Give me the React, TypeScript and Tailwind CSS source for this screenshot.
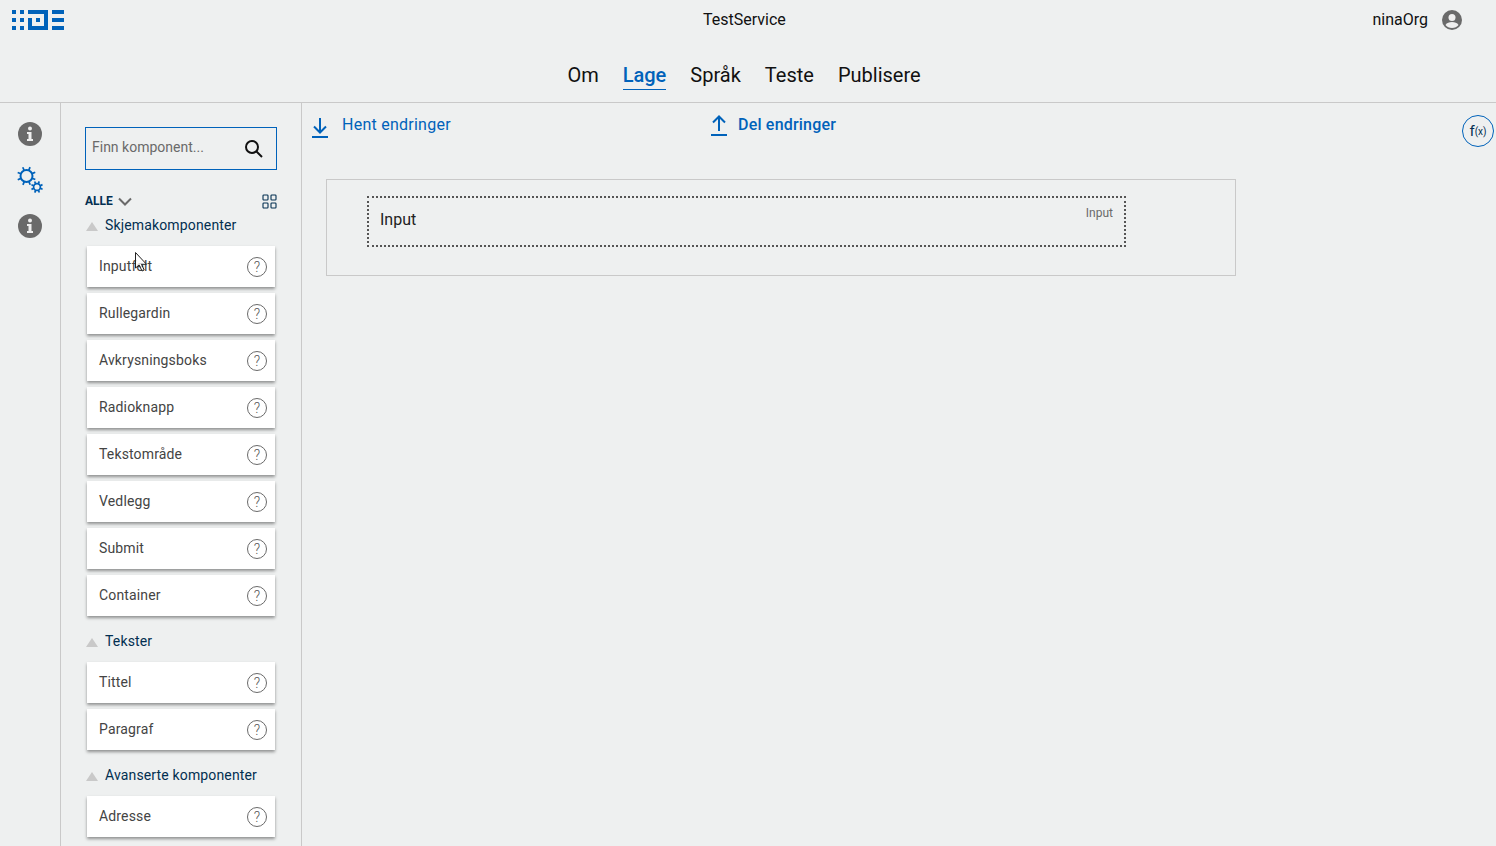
const font = { fontFamily: "Roboto, sans-serif" }

const groups = [
  {
    title: "Skjemakomponenter",
    items: ["Inputfelt", "Rullegardin", "Avkrysningsboks", "Radioknapp", "Tekstområde", "Vedlegg", "Submit", "Container"],
  },
  { title: "Tekster", items: ["Tittel", "Paragraf"] },
  { title: "Avanserte komponenter", items: ["Adresse"] },
]

const navItems = ["Om", "Lage", "Språk", "Teste", "Publisere"]

function Logo() {
  return (
    <svg width="53" height="20" viewBox="0 0 53 20" fill="#0062ba">
      <rect x="0" y="0" width="4" height="4" />
      <rect x="8" y="0" width="4" height="4" />
      <rect x="0" y="8" width="4" height="4" />
      <rect x="8" y="8" width="4" height="4" />
      <rect x="0" y="16" width="4" height="4" />
      <rect x="8" y="16" width="4" height="4" />
      <rect x="16" y="0" width="20" height="4" />
      <rect x="32" y="0" width="4" height="20" />
      <rect x="16" y="8" width="4" height="12" />
      <rect x="16" y="16" width="20" height="4" />
      <rect x="24" y="8" width="4" height="4" />
      <rect x="40" y="0" width="12" height="4" />
      <rect x="40" y="8" width="12" height="4" />
      <rect x="40" y="16" width="12" height="4" />
    </svg>
  )
}

function InfoIcon() {
  return (
    <svg width="24" height="24" viewBox="0 0 24 24">
      <circle cx="12" cy="12" r="12" fill="#6a6a6a" />
      <circle cx="12" cy="6.5" r="2" fill="#efefef" />
      <path d="M9 10h4.500v7H15v2H9v-2h1.500v-5H9z" fill="#efefef" />
    </svg>
  )
}

function Gear({ cx, cy, r, sw, outer }: { cx: number; cy: number; r: number; sw: number; outer: number }) {
  const teeth = [0, 45, 90, 135, 180, 225, 270, 315]
  return (
    <g stroke="#0062ba" fill="none">
      <circle cx={cx} cy={cy} r={r} strokeWidth={sw} />
      {teeth.map((a) => (
        <line
          key={a}
          x1={cx}
          y1={cy - r}
          x2={cx}
          y2={cy - outer}
          strokeWidth={1.7}
          transform={`rotate(${a + 22} ${cx} ${cy})`}
        />
      ))}
    </g>
  )
}

function GearsIcon() {
  return (
    <svg width="28" height="28" viewBox="0 0 28 28">
      <Gear cx={10.5} cy={10} r={6} sw={2} outer={9.500} />
      <Gear cx={21} cy={21} r={3.400} sw={1.700} outer={6} />
    </svg>
  )
}

function HelpIcon() {
  return (
    <span className="mt-px flex h-5 w-5 items-center justify-center rounded-full border border-[#6a6a6a] text-sm leading-none font-light text-[#555]">
      ?
    </span>
  )
}

function ArrowDownIcon() {
  return (
    <svg width="18" height="22" viewBox="0 0 18 22" fill="none" stroke="#0062ba" strokeWidth="2">
      <path d="M9 1v14M3 9.500l6 6 6-6" />
      <path d="M1 20h16" />
    </svg>
  )
}

function ArrowUpIcon() {
  return (
    <svg width="18" height="22" viewBox="0 0 18 22" fill="none" stroke="#0062ba" strokeWidth="2">
      <path d="M9 16V2M3 7.500l6-6 6 6" />
      <path d="M1 20h16" />
    </svg>
  )
}

function ComponentCard({ label }: { label: string }) {
  return (
    <div className="mb-1.5 ml-0.5 flex h-[41px] w-[188px] items-center justify-between bg-white pr-2 pl-3 text-sm tracking-[0.15px] text-[#444] shadow-[0_2px_3px_rgba(0,0,0,0.4)]">
      <span className="-mt-0.5">{label}</span>
      <HelpIcon />
    </div>
  )
}

export default function App() {
  return (
    <div className="relative flex h-[846px] w-[1496px] flex-col overflow-hidden bg-[#eef0f0] text-[#111]" style={font}>
      <header className="h-[103px] shrink-0 border-b border-[#c9c9c9]">
        <div className="relative flex h-[40px] items-start justify-between pt-2.5 pr-[34px] pl-3">
          <Logo />
          <span className="absolute top-2.5 left-[703px] text-base leading-[19px]">TestService</span>
          <div className="flex items-center gap-[14px]">
            <span className="-mt-px text-base leading-[19px]">ninaOrg</span>
            <svg width="20" height="20" viewBox="0 0 20 20">
              <circle cx="10" cy="10" r="10" fill="#6a6a6a" />
              <circle cx="10" cy="7.500" r="3.500" fill="#efefef" />
              <path d="M3.500 15c1.200-2.200 3.800-3 6.500-3s5.300.8 6.500 3c-1.500 2-3.800 3-6.500 3s-5-1-6.500-3z" fill="#efefef" />
            </svg>
          </div>
        </div>
        <nav className="flex justify-center gap-6 pt-[21px] pr-2 text-xl leading-[28px]">
          {navItems.map((item) =>
            item === "Lage" ? (
              <span key={item} className="h-[29px] border-b border-[#0062ba] font-medium text-[#0062ba]">
                {item}
              </span>
            ) : (
              <span key={item}>{item}</span>
            ),
          )}
        </nav>
      </header>

      <div className="flex min-h-0 flex-1">
        <aside className="flex w-[61px] shrink-0 flex-col items-center border-r border-[#c9c9c9] pt-[19px]">
          <InfoIcon />
          <div className="mt-[20px] mb-5 h-[28px]">
            <GearsIcon />
          </div>
          <InfoIcon />
        </aside>

        <section className="w-[241px] shrink-0 border-r border-[#c9c9c9] pt-6 pl-6">
          <div className="flex h-[43px] w-[192px] items-center justify-between border border-[#0062ba] pr-[12px] pl-1.5 text-sm text-[#6a6a6a]">
            <span className="-mt-1">Finn komponent...</span>
            <svg width="20" height="20" viewBox="0 0 20 20" fill="none" stroke="#111" strokeWidth="2" className="mt-px">
              <circle cx="8" cy="8" r="6" />
              <path d="M12.500 12.500l5.500 5.500" />
            </svg>
          </div>
          <div className="mt-[22px] flex h-[18px] w-[192px] items-center justify-between">
            <div className="flex items-center gap-[5px]">
              <span className="text-xs font-bold text-[#022f51]">ALLE</span>
              <svg width="14" height="9" viewBox="0 0 14 9" fill="none" stroke="#6a6a6a" strokeWidth="2">
                <path d="M1 1.500l6 6 6-6" />
              </svg>
            </div>
            <svg width="15" height="15" viewBox="0 0 15 15" fill="none" stroke="#022f51" strokeWidth="1.100">
              <rect x="1" y="1" width="5" height="5" rx="0.800" />
              <rect x="9" y="1" width="5" height="5" rx="0.800" />
              <rect x="1" y="9" width="5" height="5" rx="0.800" />
              <rect x="9" y="9" width="5" height="5" rx="0.800" />
            </svg>
          </div>
          {groups.map((group, i) => (
            <div key={group.title} className={i === 0 ? "mt-[7px]" : "mt-[17px]"}>
              <div className="mb-[13px] flex h-[16px] items-center text-sm tracking-[0.15px] text-[#022f51]">
                <span className="mt-[3px] mr-[7px] ml-px h-0 w-0 border-x-[6.5px] border-b-[9px] border-x-transparent border-b-[#c9c9c9]" />
                <span>{group.title}</span>
              </div>
              {group.items.map((item) => (
                <ComponentCard key={item} label={item} />
              ))}
            </div>
          ))}
        </section>

        <main className="min-w-0 flex-1">
          <div className="flex h-[76px]">
            <div className="flex w-[408px] items-start pt-[12px] pl-[9px]">
              <span className="mt-0.5">
                <ArrowDownIcon />
              </span>
              <span className="ml-[13px] text-base leading-[19px] tracking-[0.25px] text-[#0062ba]">Hent endringer</span>
            </div>
            <div className="flex flex-1 items-start pt-[12px]">
              <ArrowUpIcon />
              <span className="ml-[10px] text-base leading-[19px] font-medium tracking-[0.2px] text-[#0062ba]">Del endringer</span>
            </div>
            <div className="mt-[12px] mr-[2px] flex h-8 w-8 items-center justify-center rounded-full border border-[#0062ba] text-[#022f51]">
              <span className="text-[15px]">f</span>
              <span className="text-[10px]">(x)</span>
            </div>
          </div>
          <div className="ml-6 h-[97px] w-[910px] border border-[#c9c9c9] pt-4 pl-10">
            <div className="flex h-[51px] w-[759px] items-start justify-between border-2 border-dotted border-[#555] pt-[11px] pr-[11px] pl-[11px]">
              <span className="text-base leading-[22px] text-[#222]">Input</span>
              <span className="-mt-[3px] text-xs leading-[14px] text-[#6a6a6a]">Input</span>
            </div>
          </div>
        </main>
      </div>

      <svg className="absolute top-[252px] left-[135px]" width="14" height="21" viewBox="0 0 14 21">
        <path d="M.5.5v15.500l3.700-3 2.800 6 2.200-1-2.700-5.700h5z" fill="#fff" fillOpacity="0.75" stroke="#222" strokeWidth="1" />
      </svg>
    </div>
  )
}
